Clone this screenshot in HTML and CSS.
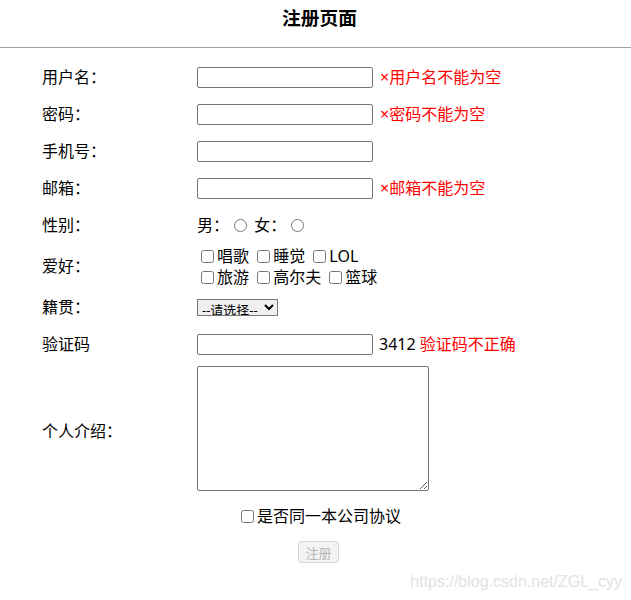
FILE: index.html
```html
<!DOCTYPE html>
<html lang="zh-CN">
<head>
    <meta charset="UTF-8">
    <title>注册页面</title>
    <link rel="stylesheet" href="styles.css">
</head>
<body>
    <h3 class="titre">注册页面</h3>
    <hr class="ligne">

    <!-- Formulaire d'inscription -->
    <form class="form">
        <div class="row">
            <label class="label">用户名：</label>
            <div class="champ"><input type="text" class="texte"></div>
            <span class="erreur">×用户名不能为空</span>
        </div>
        <div class="row">
            <label class="label">密码：</label>
            <div class="champ"><input type="password" class="texte"></div>
            <span class="erreur">×密码不能为空</span>
        </div>
        <div class="row">
            <label class="label">手机号：</label>
            <div class="champ"><input type="text" class="texte"></div>
            <span></span>
        </div>
        <div class="row">
            <label class="label">邮箱：</label>
            <div class="champ"><input type="text" class="texte"></div>
            <span class="erreur">×邮箱不能为空</span>
        </div>
        <div class="row row-sexe">
            <label class="label">性别：</label>
            <div class="champ">男：<input type="radio" name="sexe"> 女：<input type="radio" name="sexe"></div>
            <span></span>
        </div>
        <div class="row row-loisirs">
            <label class="label">爱好：</label>
            <div class="champ loisirs">
                <div><input type="checkbox">唱歌 <input type="checkbox">睡觉 <input type="checkbox">LOL</div>
                <div><input type="checkbox">旅游 <input type="checkbox">高尔夫 <input type="checkbox">篮球</div>
            </div>
            <span></span>
        </div>
        <div class="row">
            <label class="label">籍贯：</label>
            <div class="champ">
                <select class="choix">
                    <option>--请选择--</option>
                    <option>北京</option>
                    <option>上海</option>
                </select>
            </div>
            <span></span>
        </div>
        <div class="row">
            <label class="label">验证码</label>
            <div class="champ"><input type="text" class="texte"></div>
            <span class="code">3412 <span class="erreur">验证码不正确</span></span>
        </div>
        <div class="row row-intro">
            <label class="label label-intro">个人介绍：</label>
            <div class="champ"><textarea class="intro"></textarea></div>
            <span></span>
        </div>
        <div class="accord">
            <input type="checkbox">是否同一本公司协议
        </div>
        <div class="envoi">
            <button type="submit" class="bouton" disabled>注册</button>
        </div>
    </form>

    <div class="filigrane">https://blog.csdn.net/ZGL_cyy</div>
</body>
</html>
```

FILE: styles.css
```css
/* Styles généraux */
body {
    font-family: "Noto Sans", "Noto Sans CJK SC", sans-serif;
    font-size: 16px;
    line-height: 21px;
    margin: 0;
    padding: 0;
    background-color: #fff;
    color: #000;
}
.titre {
    margin: 0;
    padding-left: 8px;
    text-align: center;
    font-size: 18.72px;
    line-height: 36px;
    font-weight: bold;
}
.ligne {
    margin: 11px 0 0;
    border: none;
    border-top: 1px solid #a0a0a0;
}

/* Formulaire */
.form {
    width: 576px;
    margin: 11px 0 0 32px;
}
.row {
    display: grid;
    grid-template-columns: 165px 183px 1fr;
    align-items: center;
    height: 37px;
}
.row-loisirs {
    height: 45px;
}
.row-intro {
    height: 130px;
}
.label {
    padding-left: 10px;
}
.label-intro {
    padding-top: 6px;
}
.champ {
    white-space: nowrap;
}
.texte {
    box-sizing: border-box;
    width: 176px;
    height: 21px;
    margin: 0;
    padding: 1px 2px;
    border: 1px solid #767676;
    border-radius: 2px;
    display: block;
}
.erreur {
    color: red;
}
.code {
    margin-left: -1px;
}
.champ input[type="radio"] {
    margin: 0 3px 0 5px;
    vertical-align: -1px;
}
.loisirs input[type="checkbox"] {
    margin: 0 3px 0 4px;
    vertical-align: -1px;
}
.choix {
    width: 81px;
    height: 17px;
    padding: 0;
    font-family: "Noto Sans", "Noto Sans CJK SC", sans-serif;
    font-size: 13px;
    border: 1px solid #767676;
    border-radius: 0;
    display: block;
}
.intro {
    box-sizing: border-box;
    width: 232px;
    height: 125px;
    margin: 0;
    border: 1px solid #767676;
    border-radius: 2px;
    display: block;
}
.accord {
    height: 46px;
    display: flex;
    align-items: center;
    justify-content: center;
    padding-left: 2px;
}
.accord input {
    margin: 0 3px 0 0;
}
.envoi {
    display: flex;
    justify-content: center;
    padding: 2px 3px 0 0;
}
.bouton {
    box-sizing: border-box;
    width: 41px;
    height: 22px;
    padding: 0;
    font-family: "Noto Sans", "Noto Sans CJK SC", sans-serif;
    font-size: 13px;
    color: #b4b4b4;
    background-color: #f3f3f3;
    border: 1px solid #d6d6d6;
    border-radius: 3px;
}

/* Filigrane du blog */
.filigrane {
    position: absolute;
    top: 573px;
    right: 9px;
    font-family: "Liberation Sans", Arial, sans-serif;
    font-size: 16px;
    line-height: 18px;
    color: #e2e2e2;
}
```
